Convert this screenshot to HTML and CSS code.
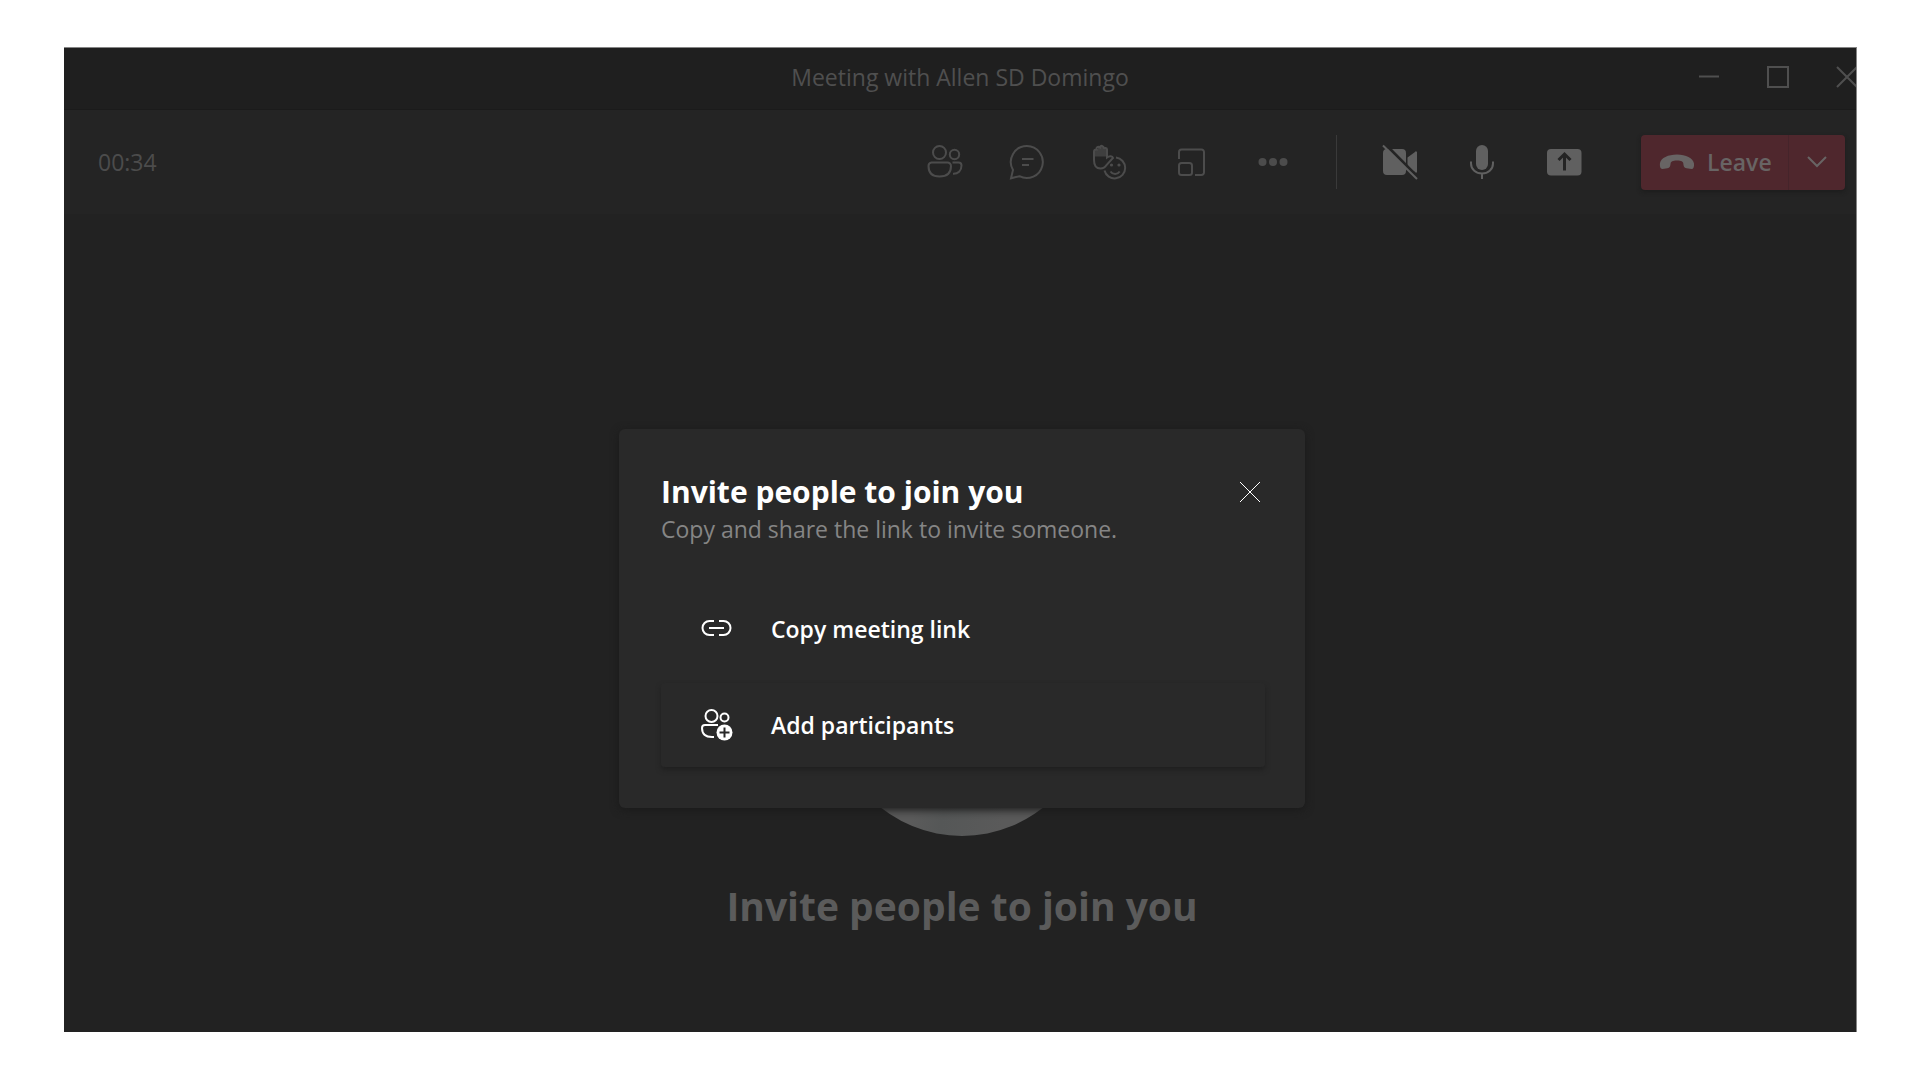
FILE: index.html
```html
<!DOCTYPE html>
<html lang="en">
<head>
<meta charset="utf-8">
<title>Meeting with Allen SD Domingo</title>
<link rel="stylesheet" href="styles.css">
</head>
<body>
<div class="window">
  <header class="titlebar">
    <h1 class="titlebar-text">Meeting with Allen SD Domingo</h1>
    <div class="window-controls">
      <button class="window-button" aria-label="Minimize"><svg width="22" height="22" viewBox="0 0 22 22"><path d="M1 10.500h20"/></svg></button>
      <button class="window-button" aria-label="Maximize"><svg width="22" height="22" viewBox="0 0 22 22"><path d="M1 1h20v20H1z"/></svg></button>
      <button class="window-button" aria-label="Close"><svg width="22" height="22" viewBox="0 0 22 22"><path d="M1 1l20 20M21 1L1 21"/></svg></button>
    </div>
  </header>

  <div class="toolbar">
    <time class="timer">00:34</time>
    <div class="tools">
      <button class="tool" aria-label="Show participants">
        <svg width="36" height="36" viewBox="0 0 36 36"><circle cx="12.500" cy="8.500" r="6.500"/><circle cx="27.500" cy="10.500" r="4.700"/><path d="M4.500 18.500h16a3.500 3.500 0 0 1 3.500 3.500c0 7-4 10.500-11.500 10.500S1.500 29 1.500 22a3.500 3.500 0 0 1 3-3.500zM25.500 18.500h6a3 3 0 0 1 3 3c0 5.500-3.500 8.500-8.500 8.300"/></svg>
      </button>
      <button class="tool" aria-label="Show conversation">
        <svg width="36" height="36" viewBox="0 0 36 36"><path d="M18 2a16 16 0 1 1-7.600 30.200L2 34.300l2-8.300A16 16 0 0 1 18 2zM13 15h11.500M13 21h7"/></svg>
      </button>
      <button class="tool" aria-label="Show reactions">
        <svg width="36" height="36" viewBox="0 0 36 36"><path class="solid fingers" d="M4 5h3V3h3V2h3v2h3v8.500H4z"/><path d="M3 7.500v8.500c0 5 2 8.500 6.500 8.500 3 0 4.500-1 6-3.500L22 14c-.5-2-3.500-2.500-6-.5V5.500c0-2-2.500-2-3-.7C12.800 1.500 9.500.8 9 3.500 7 2 5 3.500 5.500 5.500 4.200 5.300 3 6 3 7.500z"/><path d="M25 13.500a10.500 10.500 0 1 1-11.500 13M19.500 27.500c2.200 3.300 7 3.300 9.200 0"/><circle class="solid" cx="20.500" cy="21" r="1.600"/><circle class="solid" cx="28" cy="21" r="1.600"/></svg>
      </button>
      <button class="tool" aria-label="Rooms">
        <svg width="36" height="36" viewBox="0 0 36 36"><path d="M6 15V8a2.500 2.500 0 0 1 2.500-2.500h20A2.500 2.500 0 0 1 31 8v20.500a2.500 2.500 0 0 1-2.500 2.500H22"/><rect x="6" y="19" width="13" height="12" rx="2.500"/></svg>
      </button>
      <button class="tool" aria-label="More actions">
        <svg class="filled" width="36" height="36" viewBox="0 0 36 36"><circle cx="7.500" cy="18" r="4"/><circle cx="18" cy="18" r="4"/><circle cx="28.500" cy="18" r="4"/></svg>
      </button>
      <span class="separator"></span>
      <button class="tool tool-bright" aria-label="Turn camera on">
        <svg class="filled" width="36" height="36" viewBox="0 0 36 36"><path d="M6 5h14a4 4 0 0 1 4 4v18a4 4 0 0 1-4 4H5a4 4 0 0 1-4-4V9a4 4 0 0 1 4-4zM25.500 13.500L33 8a1 1 0 0 1 2 .8v18.500a1 1 0 0 1-2 .7l-7.500-5z"/><path class="cutout" d="M3 0L36 33.500"/><path class="slash" d="M1 1.500L35 35"/></svg>
      </button>
      <button class="tool tool-bright" aria-label="Mute">
        <svg class="filled" width="36" height="36" viewBox="0 0 36 36"><rect x="12" y="1" width="12" height="25" rx="6"/><path class="slash" d="M7 17.500v2c0 6 5 10 11 10s11-4 11-10v-2M18 29.500V35"/></svg>
      </button>
      <button class="tool tool-bright" aria-label="Share content">
        <svg class="filled" width="36" height="36" viewBox="0 0 36 36"><rect x="1" y="5" width="34.500" height="26.500" rx="4"/><path class="cutout" d="M18.500 26.500V10.500M12.500 16l6-6 6 6"/></svg>
      </button>
    </div>
    <div class="leave">
      <button class="leave-main">
        <svg width="36" height="16" viewBox="0 0 36 16"><path d="M1 9C2 4 9 .5 18 .5S34 4 35 9.500c.3 3.500-.5 5.500-2.500 5.500l-5-.8c-2.500-.5-3-2-3.200-4.700-.1-2-2-3-6.300-3s-6.200 1-6.400 3c-.3 2.700-.7 4.200-3.200 4.700l-5 .8C1.300 15 .6 12 1 9z"/></svg>
        Leave
      </button>
      <button class="leave-more" aria-label="Leave options">
        <svg width="20" height="12" viewBox="0 0 20 12"><path d="M1 1l9 9 9-9"/></svg>
      </button>
    </div>
  </div>

  <main class="stage">
    <div class="empty-state">
      <div class="avatar"></div>
      <h2 class="empty-title">Invite people to join you</h2>
    </div>
    <div class="overlay">
      <section class="dialog" role="dialog" aria-labelledby="dialog-title">
        <div class="dialog-head">
          <h2 class="dialog-title" id="dialog-title">Invite people to join you</h2>
          <button class="dialog-close" aria-label="Close"><svg width="22" height="22" viewBox="0 0 22 22"><path d="M1 1l20 20M21 1L1 21"/></svg></button>
        </div>
        <p class="dialog-text">Copy and share the link to invite someone.</p>
        <div class="actions">
          <button class="action">
            <svg width="32" height="32" viewBox="0 0 32 32"><path d="M13 8H8.500a7 7 0 0 0 0 14H13M18 8h4.500a7 7 0 0 1 0 14H18M8 15h15"/></svg>
            Copy meeting link
          </button>
          <button class="action action-raised">
            <svg width="32" height="32" viewBox="0 0 32 32"><circle cx="10.500" cy="7" r="6"/><circle cx="23.500" cy="8.500" r="4"/><path d="M17 16H4a3 3 0 0 0-3 3c0 5.500 3.500 9 10 9h2"/><circle class="badge" cx="23.500" cy="23.500" r="8"/><path class="badge-plus" d="M23.500 18.500v10M18.500 23.500h10"/></svg>
            Add participants
          </button>
        </div>
      </section>
    </div>
  </main>
</div>
</body>
</html>
```
FILE: styles.css
```css
* {
  box-sizing: border-box;
}

body {
  margin: 0;
  background: #fff;
  font-family: "Open Sans", "Noto Sans", sans-serif;
  font-size: 23px;
  line-height: 32px;
}

h1,
h2,
p {
  margin: 0;
}

button {
  margin: 0;
  padding: 0;
  border: 0;
  background: none;
  color: inherit;
  font: inherit;
}

svg {
  display: block;
  flex: none;
  fill: none;
  stroke: currentColor;
  stroke-width: 2;
}

.window {
  display: flex;
  flex-direction: column;
  min-height: calc(100vh - 95px);
  margin: 47px 63px 48px 64px;
  border-top: 1px solid #858585;
  border-right: 1px solid #858585;
  background: #222;
  overflow: hidden;
}

.titlebar {
  display: grid;
  grid-template-columns: 1fr auto 1fr;
  align-items: center;
  height: 62px;
  padding-bottom: 4px;
  border-bottom: 1px solid #1b1b1b;
  background: #1f1f1f;
  color: #4f4f4f;
}

.titlebar-text {
  grid-column: 2;
  font-size: 23px;
  font-weight: 400;
}

.window-controls {
  display: flex;
  justify-content: flex-end;
  margin-right: -25px;
}

.window-button {
  display: grid;
  place-items: center;
  width: 69px;
  height: 56px;
}

.toolbar {
  display: flex;
  align-items: center;
  height: 104px;
  padding: 0 11px 0 34px;
  background: #242424;
  color: #4c4c4c;
}

.timer {
  flex: 1;
}

.tools {
  display: flex;
  align-items: center;
}

.tool {
  display: grid;
  place-items: center;
  width: 82px;
  height: 56px;
}

.tool-bright {
  color: #606060;
}

.solid {
  fill: currentColor;
  stroke: none;
}

.fingers {
  opacity: 0.7;
}

.filled {
  fill: currentColor;
  stroke: none;
}

.cutout {
  fill: none;
  stroke: #242424;
  stroke-width: 3;
}

.slash {
  fill: none;
  stroke: currentColor;
  stroke-width: 2;
}

.separator {
  width: 1px;
  height: 54px;
  margin: 0 22px;
  background: #3a3a3a;
}

.leave {
  display: flex;
  height: 55px;
  margin-left: 36px;
  border-radius: 4px;
  background: #4f272d;
  box-shadow: 0 2px 4px #1c1c1c;
  color: #686464;
}

.leave-main {
  display: flex;
  align-items: center;
  gap: 12px;
  width: 148px;
  padding-left: 18px;
  border-right: 1px solid #45242a;
  font-weight: 600;
}

.leave-main svg {
  fill: currentColor;
  stroke: none;
}

.leave-more {
  display: grid;
  place-items: center;
  width: 56px;
}

.stage {
  position: relative;
  flex: 1;
}

.empty-state {
  display: flex;
  flex-direction: column;
  align-items: center;
  gap: 42px;
  padding: 362px 0 0 4px;
}

.avatar {
  width: 260px;
  height: 260px;
  border-radius: 50%;
  background: linear-gradient(100deg, #5b5b5b 40%, #555757 50%, #5a5a5a 70%);
}

.empty-title {
  color: #5b5b5b;
  font-size: 39px;
  font-weight: 700;
  line-height: 56px;
}

.overlay {
  position: absolute;
  inset: 0;
  display: flex;
  justify-content: center;
  align-items: flex-start;
  padding: 215px 0 0 4px;
}

.dialog {
  width: 686px;
  padding: 42px 40px 41px 42px;
  border-radius: 6px;
  background: #292929;
  box-shadow: 0 2px 8px #1a1a1a;
  color: #fff;
}

.dialog-head {
  display: flex;
  align-items: center;
  justify-content: space-between;
}

.dialog-title {
  font-size: 30px;
  font-weight: 700;
  line-height: 42px;
}

.dialog-close {
  display: grid;
  place-items: center;
  width: 30px;
  height: 42px;
}

.dialog-close svg {
  stroke-width: 1;
}

.dialog-text {
  color: #858585;
}

.actions {
  display: grid;
  gap: 12px;
  margin-top: 42px;
}

.action {
  display: flex;
  align-items: center;
  gap: 38px;
  height: 84px;
  padding: 0 40px;
  border-radius: 4px;
  font-weight: 600;
  text-align: left;
}

.action-raised {
  box-shadow: 0 3px 5px #202020;
}

.badge {
  fill: #fff;
  stroke: none;
}

.badge-plus {
  stroke: #292929;
}
```
